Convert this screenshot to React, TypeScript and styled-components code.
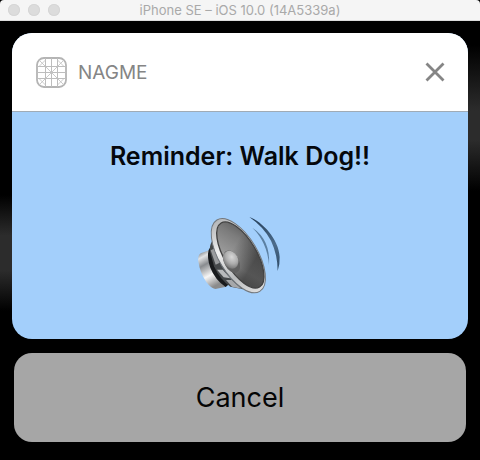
import React from "react";
import styled, { createGlobalStyle } from "styled-components";

const GlobalStyle = createGlobalStyle`
  *, *::before, *::after { box-sizing: border-box; }
  body { margin: 0; background: #000; font-family: Inter, "Liberation Sans", sans-serif; }
  button { font: inherit; border: 0; padding: 0; cursor: pointer; }
`;

const Window = styled.div`
  display: flex;
  flex-direction: column;
  min-height: 100vh;
  background: #000;
`;

const TitleBar = styled.header`
  display: grid;
  grid-template-columns: 1fr auto 1fr;
  align-items: center;
  height: 21px;
  padding: 0 8px;
  background: #f5f5f5;
  border-bottom: 1px solid #dcdcdc;
  border-radius: 4px 4px 0 0;
`;

const WindowControls = styled.div`
  display: flex;
  gap: 8px;
`;

const WindowButton = styled.button`
  width: 12px;
  height: 12px;
  border-radius: 50%;
  background: #dcdcdc;
  box-shadow: inset 0 0 0 1px #d6d6d6;
`;

const WindowTitle = styled.h1`
  margin: 0;
  font-size: 13px;
  line-height: 20px;
  font-weight: 400;
  color: #a9a9a9;
`;

const Screen = styled.main`
  flex: 1;
  display: flex;
  flex-direction: column;
  gap: 14px;
  padding: 12px 12px 18px;
  background:
    linear-gradient(#000, #2c2c2c 35%, #2c2c2c 65%, #000) left 174px / 12px 116px no-repeat,
    linear-gradient(#000, #2c2c2c 45%, #2c2c2c 65%, #000) right 24px / 12px 146px no-repeat,
    #000;
`;

const Card = styled.article`
  border-radius: 20px;
  overflow: hidden;
  background: #a3cffb;
`;

const CardHeader = styled.div`
  display: flex;
  align-items: center;
  gap: 11px;
  height: 79px;
  padding: 0 22px 0 24px;
  background: #fff;
  border-bottom: 1px solid #a0abb5;
`;

const AppName = styled.span`
  flex: 1;
  padding-top: 2px;
  font-size: 19px;
  line-height: 24px;
  color: #858585;
`;

const CloseButton = styled.button`
  display: flex;
  background: none;
`;

const CardBody = styled.div`
  display: flex;
  flex-direction: column;
  align-items: center;
  gap: 42px;
  padding: 28px 16px 37px;
`;

const Reminder = styled.h2`
  margin: 0;
  font-size: 25px;
  line-height: 32px;
  font-weight: 600;
  color: #05080c;
`;

const SpeakerDrawing = styled.svg`
  display: block;
  width: 88px;
  height: 88px;
  margin-right: 4px;
`;

const CancelButton = styled.button`
  height: 89px;
  margin: 0 2px;
  border-radius: 18px;
  background: #a6a6a6;
  color: #050505;
  font-size: 27px;
  line-height: 36px;
`;

const AppIcon = () => (
  <svg width="31" height="31" viewBox="0 0 31 31" fill="none" stroke="#c4c4c4" aria-hidden="true">
    <rect x="1" y="1" width="29" height="29" rx="7" stroke="#b4b4b4" strokeWidth="1.8" />
    <path d="M9.5 1v29M15.5 1v29M21.5 1v29M1 9.5h29M1 15.5h29M1 21.5h29" stroke="#bdbdbd" />
    <path d="M3 3l6.5 6.5M9.5 3L3 9.5M28 3l-6.5 6.5M21.5 3L28 9.5M3 28l6.5-6.5M9.5 28L3 21.5M28 28l-6.5-6.5M21.5 28L28 21.5M10 10l11 11M21 10L10 21" strokeWidth="0.9" />
  </svg>
);

const CloseIcon = () => (
  <svg width="22" height="22" viewBox="0 0 22 22" stroke="#858585" strokeWidth="2.8" aria-hidden="true">
    <path d="M2.5 2.5l17 17M19.5 2.5l-17 17" />
  </svg>
);

const SpeakerIcon = () => (
  <SpeakerDrawing viewBox="42 42 264 264" role="img" aria-label="Speaker">
    <defs>
      <linearGradient id="rim" x1="0" y1="0" x2="1" y2="0">
        <stop offset="0" stopColor="#b4b6b8" />
        <stop offset="0.35" stopColor="#f0f0f0" />
        <stop offset="0.7" stopColor="#b9bbbc" />
        <stop offset="1" stopColor="#dedede" />
      </linearGradient>
      <linearGradient id="cone" gradientUnits="userSpaceOnUse" x1="125" y1="75" x2="225" y2="265">
        <stop offset="0" stopColor="#4b4b4b" />
        <stop offset="0.3" stopColor="#7c7c7c" />
        <stop offset="0.65" stopColor="#a2a2a2" />
        <stop offset="1" stopColor="#606060" />
      </linearGradient>
      <linearGradient id="coneShade" gradientUnits="userSpaceOnUse" x1="160" y1="185" x2="225" y2="150">
        <stop offset="0" stopColor="#222" stopOpacity="0" />
        <stop offset="1" stopColor="#222" stopOpacity="0.6" />
      </linearGradient>
      <linearGradient id="magnet" x1="0" y1="0" x2="0.4" y2="1">
        <stop offset="0" stopColor="#595d61" />
        <stop offset="0.2" stopColor="#e2e3e4" />
        <stop offset="0.4" stopColor="#898c8f" />
        <stop offset="0.7" stopColor="#f6f6f6" />
        <stop offset="1" stopColor="#8b8b8b" />
      </linearGradient>
      <radialGradient id="cap" cx="0.4" cy="0.35" r="0.7">
        <stop offset="0" stopColor="#d8d8d8" />
        <stop offset="0.55" stopColor="#adadad" />
        <stop offset="1" stopColor="#707070" />
      </radialGradient>
      <linearGradient id="wave" x1="0" y1="0" x2="0" y2="1">
        <stop offset="0" stopColor="#243e59" />
        <stop offset="0.5" stopColor="#4d6c8a" />
        <stop offset="1" stopColor="#2c4864" />
      </linearGradient>
    </defs>
    <path d="M88 151L62 160Q53 166 55 184Q60 220 79 246Q93 265 106 267L139 260Z" fill="url(#magnet)" />
    <path d="M86 150Q80 171 91 203Q105 239 137 261L147 253L117 180L98 130Z" fill="#191b1d" />
    <path d="M99 120Q87 134 90 155L102 199Q120 239 151 260L189 268L144 180Z" fill="#45484a" />
    <path d="M92 151L102 146L119 188L107 194Z" fill="#9a9c9e" />
    <path d="M111 209L128 209L151 235L131 232Z" fill="#b8babc" />
    <path d="M138 240L155 240L184 266L156 260Z" fill="#a6a8aa" />
    <ellipse cx="175" cy="167" rx="125" ry="58" transform="rotate(59 175 167)" fill="url(#rim)" stroke="#73787d" strokeWidth="3" />
    <ellipse cx="181" cy="165" rx="112" ry="48" transform="rotate(59 181 165)" fill="url(#cone)" />
    <ellipse cx="181" cy="165" rx="112" ry="48" transform="rotate(59 181 165)" fill="url(#coneShade)" stroke="#424242" strokeWidth="4" />
    <ellipse cx="155" cy="185" rx="36" ry="22" transform="rotate(64 155 185)" fill="#606060" />
    <ellipse cx="152" cy="179" rx="28" ry="22" transform="rotate(62 152 179)" fill="url(#cap)" />
    <path d="M208 51C246 64 297 118 299 171Q300 194 293 213Q293 165 273 122Q250 80 208 51Z" fill="url(#wave)" />
    <path d="M217 83Q272 119 267 195Q262 127 217 83Z" fill="#5c80a2" />
  </SpeakerDrawing>
);

export default function App() {
  return (
    <Window>
      <GlobalStyle />
      <TitleBar>
        <WindowControls>
          <WindowButton aria-label="Close window" />
          <WindowButton aria-label="Minimize window" />
          <WindowButton aria-label="Zoom window" />
        </WindowControls>
        <WindowTitle>iPhone SE – iOS 10.0 (14A5339a)</WindowTitle>
      </TitleBar>
      <Screen>
        <Card>
          <CardHeader>
            <AppIcon />
            <AppName>NAGME</AppName>
            <CloseButton aria-label="Dismiss notification">
              <CloseIcon />
            </CloseButton>
          </CardHeader>
          <CardBody>
            <Reminder>Reminder: Walk Dog!!</Reminder>
            <SpeakerIcon />
          </CardBody>
        </Card>
        <CancelButton>Cancel</CancelButton>
      </Screen>
    </Window>
  );
}
